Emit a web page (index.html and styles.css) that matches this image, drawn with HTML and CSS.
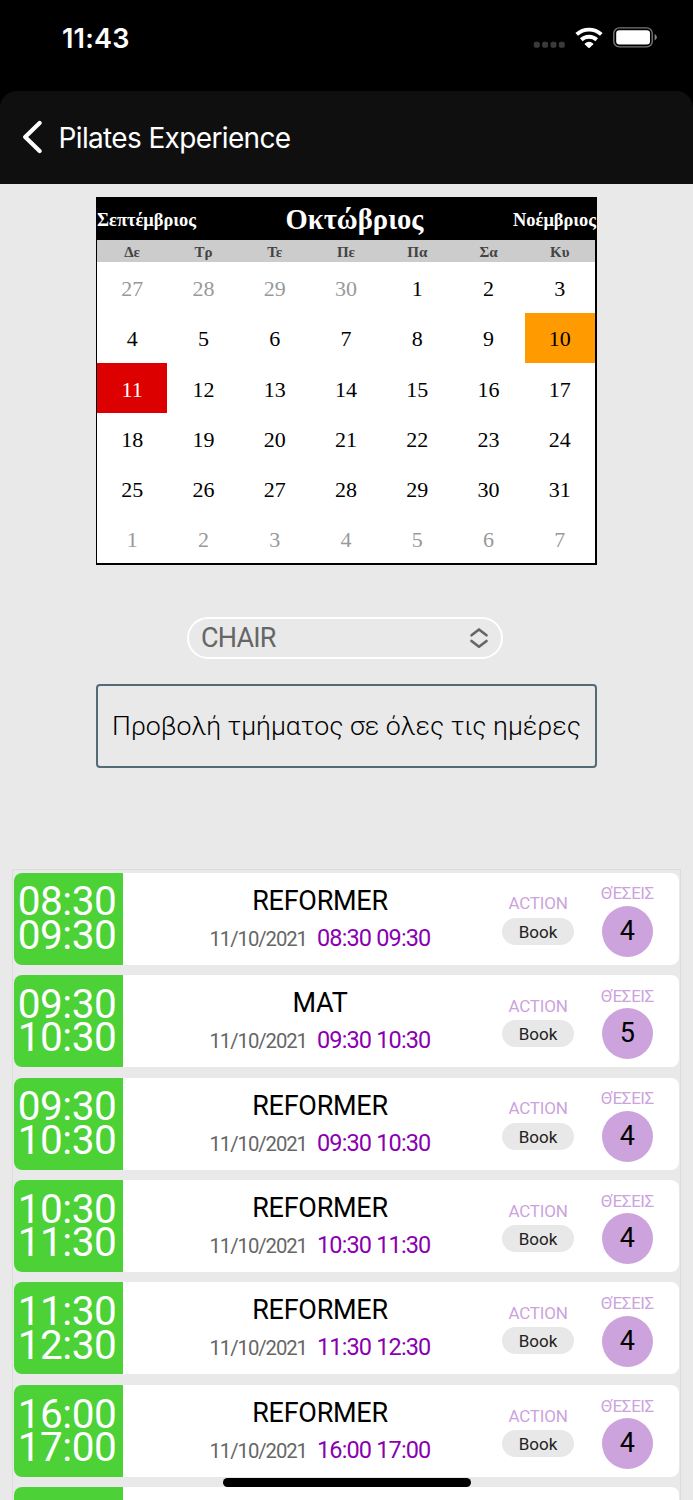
FILE: index.html
```html
<!DOCTYPE html>
<html lang="el">
<head>
<meta charset="utf-8">
<title>Pilates Experience</title>
<link rel="stylesheet" href="styles.css">
</head>
<body>
<div class="screen">
  <div class="status">
    <span class="clock">11:43</span>
    <svg class="status-icons" width="126" height="24" viewBox="0 0 126 24">
      <g fill="#3a3a3a"><rect x="3.8" y="15.8" width="6" height="6" rx="2"/><rect x="12.1" y="15.8" width="6" height="6" rx="2"/><rect x="20.5" y="15.8" width="6" height="6" rx="2"/><rect x="28.8" y="15.8" width="6" height="6" rx="2"/></g>
      <g fill="none" stroke="#fff" stroke-width="3.9"><path d="M46.7 8.4a18.2 18.2 0 0 1 24.6 0"/><path d="M51.3 13.7a11.4 11.4 0 0 1 15.400 0"/></g>
      <path d="M54.900 17.400a6.200 6.200 0 0 1 8.200 0q.5.500 0 1L59.700 21.700q-.7.600-1.400 0L54.900 18.400q-.5-.5 0-1z" fill="#fff"/>
      <rect x="83.800" y="1.900" width="38.400" height="19" rx="5.500" fill="none" stroke="#777" stroke-width="1.400"/>
      <rect x="86.200" y="4.200" width="33.800" height="14.300" rx="3.200" fill="#fff"/>
      <path d="M124.600 8v6.600q2.200-.8 2.200-3.300t-2.200-3.300z" fill="#888"/>
    </svg>
  </div>
  <header class="bar">
    <svg class="back" width="20" height="34" viewBox="0 0 20 34"><path d="M17.600 3 3.200 17l14.400 14" fill="none" stroke="#fff" stroke-width="4.200" stroke-linecap="round" stroke-linejoin="round"/></svg>
    <h1 class="title">Pilates Experience</h1>
  </header>
  <main class="content">
    <section class="calendar">
      <div class="months"><span class="month">Σεπτέμβριος</span><span class="month current">Οκτώβριος</span><span class="month next">Νοέμβριος</span></div>
      <div class="weekdays"><span>Δε</span><span>Τρ</span><span>Τε</span><span>Πε</span><span>Πα</span><span>Σα</span><span>Κυ</span></div>
      <div class="days">
        <span class="off">27</span><span class="off">28</span><span class="off">29</span><span class="off">30</span><span>1</span><span>2</span><span>3</span>
        <span>4</span><span>5</span><span>6</span><span>7</span><span>8</span><span>9</span><span class="today">10</span>
        <span class="selected">11</span><span>12</span><span>13</span><span>14</span><span>15</span><span>16</span><span>17</span>
        <span>18</span><span>19</span><span>20</span><span>21</span><span>22</span><span>23</span><span>24</span>
        <span>25</span><span>26</span><span>27</span><span>28</span><span>29</span><span>30</span><span>31</span>
        <span class="off">1</span><span class="off">2</span><span class="off">3</span><span class="off">4</span><span class="off">5</span><span class="off">6</span><span class="off">7</span>
      </div>
    </section>
    <div class="select"><span>CHAIR</span>
      <svg width="20" height="22" viewBox="0 0 20 22"><path d="M2.500 8.200 10 2.500l7.500 5.700M2.500 14 10 19.700 17.500 14" fill="none" stroke="#666" stroke-width="2.700" stroke-linecap="round" stroke-linejoin="round"/></svg>
    </div>
    <div class="all-days">Προβολή τμήματος σε όλες τις ημέρες</div>
    <section class="list">
      <article class="card"><div class="time"><span>08:30</span><span>09:30</span></div><div class="info"><div class="name">REFORMER</div><div class="when"><span class="date">11/10/2021</span><span class="hours">08:30 09:30</span></div></div><div class="action"><span class="label">ACTION</span><span class="book">Book</span></div><div class="seats"><span class="label seat-label">ΘΈΣΕΙΣ</span><span class="count">4</span></div></article>
      <article class="card"><div class="time"><span>09:30</span><span>10:30</span></div><div class="info"><div class="name">MAT</div><div class="when"><span class="date">11/10/2021</span><span class="hours">09:30 10:30</span></div></div><div class="action"><span class="label">ACTION</span><span class="book">Book</span></div><div class="seats"><span class="label seat-label">ΘΈΣΕΙΣ</span><span class="count">5</span></div></article>
      <article class="card"><div class="time"><span>09:30</span><span>10:30</span></div><div class="info"><div class="name">REFORMER</div><div class="when"><span class="date">11/10/2021</span><span class="hours">09:30 10:30</span></div></div><div class="action"><span class="label">ACTION</span><span class="book">Book</span></div><div class="seats"><span class="label seat-label">ΘΈΣΕΙΣ</span><span class="count">4</span></div></article>
      <article class="card"><div class="time"><span>10:30</span><span>11:30</span></div><div class="info"><div class="name">REFORMER</div><div class="when"><span class="date">11/10/2021</span><span class="hours">10:30 11:30</span></div></div><div class="action"><span class="label">ACTION</span><span class="book">Book</span></div><div class="seats"><span class="label seat-label">ΘΈΣΕΙΣ</span><span class="count">4</span></div></article>
      <article class="card"><div class="time"><span>11:30</span><span>12:30</span></div><div class="info"><div class="name">REFORMER</div><div class="when"><span class="date">11/10/2021</span><span class="hours">11:30 12:30</span></div></div><div class="action"><span class="label">ACTION</span><span class="book">Book</span></div><div class="seats"><span class="label seat-label">ΘΈΣΕΙΣ</span><span class="count">4</span></div></article>
      <article class="card"><div class="time"><span>16:00</span><span>17:00</span></div><div class="info"><div class="name">REFORMER</div><div class="when"><span class="date">11/10/2021</span><span class="hours">16:00 17:00</span></div></div><div class="action"><span class="label">ACTION</span><span class="book">Book</span></div><div class="seats"><span class="label seat-label">ΘΈΣΕΙΣ</span><span class="count">4</span></div></article>
      <article class="card"><div class="time"></div></article>
    </section>
  </main>
  <div class="home"></div>
</div>
</body>
</html>
```
FILE: styles.css
```css
* { box-sizing: border-box; }
body { margin: 0; background: #000; font-family: Roboto, sans-serif; }
.screen { position: relative; width: 693px; height: 1500px; overflow: hidden; display: flex; flex-direction: column; }
.status { flex: none; height: 90.500px; padding: 26px 37px 0 62px; display: flex; justify-content: space-between; align-items: flex-start; }
.clock { color: #fff; font: 600 27px/26px Inter, sans-serif; letter-spacing: 0.2px; }
.status-icons { overflow: visible; }
.bar { flex: none; height: 93.500px; background: #0f0f0f; border-radius: 17px 17px 0 0; display: flex; align-items: center; padding-left: 22px; gap: 16.500px; }
.title { margin: 0; padding-top: 1px; color: #fff; font: 400 28px/34px Inter, sans-serif; letter-spacing: -0.640px; }
.content { flex: 1; min-height: 0; background: #e9e9e9; padding: 13px 12px 0; display: flex; flex-direction: column; align-items: center; }
.calendar { flex: none; width: 501px; height: 368px; border: 2px solid #000; border-width: 0 2px 2px 1px; background: #fff; font-family: "Liberation Serif", serif; }
.months { height: 43px; background: #000; color: #fff; display: flex; justify-content: space-between; align-items: center; margin: 0 -1px 0 0; }
.month { font-size: 18.400px; font-weight: 700; line-height: 24px; padding-top: 2px; }
.current { font-size: 28.600px; line-height: 40px; }
.weekdays { height: 22px; background: #ccc; color: #444; display: grid; grid-template-columns: repeat(7, 1fr); gap: 1px; text-align: center; font-size: 15px; font-weight: 700; line-height: 25px; }
.days { display: grid; grid-template-columns: repeat(7, 1fr); grid-auto-rows: 50.300px; column-gap: 1px; text-align: center; font-size: 22px; line-height: 54px; color: #000; }
.days span { height: 50px; }
.off { color: #999; }
.today { background: #ff9a00; margin-top: 0.500px; line-height: 52px; }
.selected { background: #d00; color: #fff; }
.select { flex: none; width: 316px; height: 42px; margin-top: 52px; margin-right: 4px; border: 2px solid #fff; border-radius: 21px; display: flex; align-items: center; justify-content: space-between; padding: 0 12px 0 12.500px; font-size: 27px; line-height: 39px; color: #666; letter-spacing: -0.8px; }
.all-days { flex: none; width: 501px; height: 84px; margin-top: 25px; border: 2px solid #546a76; border-radius: 4px; text-align: center; font-size: 26.700px; font-weight: 300; line-height: 80px; color: #000; white-space: nowrap; }
.list { flex: none; width: 669px; margin-top: 101px; border: 1px solid #dcdcdc; padding: 2.700px 1px 0 0.500px; display: flex; flex-direction: column; gap: 10.450px; }
.card { height: 92px; background: #fff; border-radius: 8px; overflow: hidden; display: grid; grid-template-columns: 109px 395px 41px 1fr; }
.time { background: #4cd137; color: #fff; display: flex; flex-direction: column; align-items: center; padding: 12.700px 2px 0 0; font-size: 40.500px; line-height: 33.600px; letter-spacing: -0.500px; }
.info { text-align: center; padding-top: 11px; }
.name { font-size: 27px; line-height: 34px; letter-spacing: -0.250px; }
.when { display: flex; justify-content: center; align-items: baseline; gap: 10px; line-height: 39px; margin-top: 1px; }
.date { font-size: 20.300px; color: #666; letter-spacing: -1.050px; }
.hours { font-size: 23.500px; color: #8a00b0; letter-spacing: -0.850px; }
.action { width: 72px; margin-left: -15.500px; display: flex; flex-direction: column; align-items: center; padding-top: 20.700px; }
.label { font-size: 17px; line-height: 20px; color: #cca3dd; white-space: nowrap; letter-spacing: -0.200px; }
.seat-label { letter-spacing: -0.450px; }
.book { width: 72px; height: 27px; margin-top: 4.300px; border-radius: 14px; background: #e8e8e8; color: #222; font-size: 17px; line-height: 28px; text-align: center; }
.seats { display: flex; flex-direction: column; align-items: center; padding: 10.700px 0 0 17px; }
.count { width: 51px; height: 51px; margin-top: 2.500px; border-radius: 50%; background: #cca3dd; font-size: 27px; line-height: 50px; text-align: center; color: #000; }
.home { position: absolute; left: 222.500px; top: 1477.500px; width: 248px; height: 9px; border-radius: 5px; background: #000; }
```
